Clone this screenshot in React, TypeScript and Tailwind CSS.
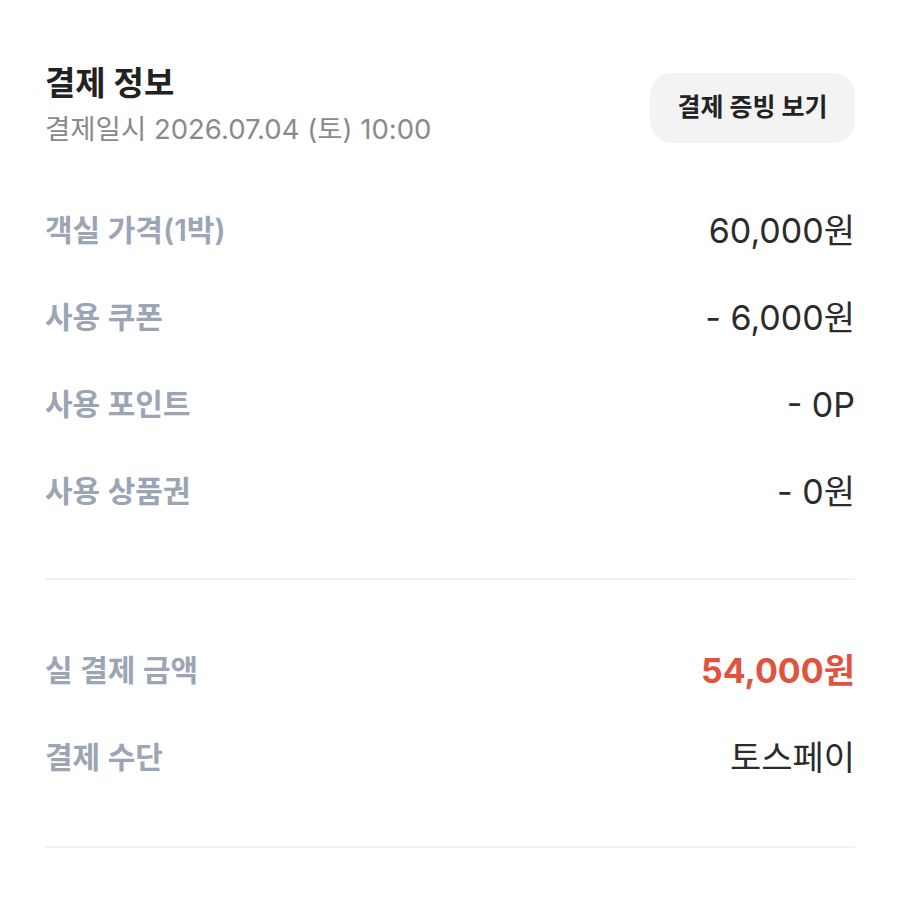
const font = { fontFamily: '"Inter", "Noto Sans CJK KR", sans-serif' };

type Row = { label: string; value: string; accent?: boolean };

const priceRows: Row[] = [
  { label: '객실 가격(1박)', value: '60,000원' },
  { label: '사용 쿠폰', value: '- 6,000원' },
  { label: '사용 포인트', value: '- 0P' },
  { label: '사용 상품권', value: '- 0원' },
];

const payRows: Row[] = [
  { label: '실 결제 금액', value: '54,000원', accent: true },
  { label: '결제 수단', value: '토스페이' },
];

function InfoRow({ label, value, accent }: Row) {
  return (
    <div className="flex h-[87px] items-center justify-between">
      <span className="text-[30px] font-semibold text-[#9ba5b4]">{label}</span>
      <span
        className={
          accent
            ? 'text-[34px] font-bold text-[#e0533f]'
            : 'text-[34px] text-[#2b2b2b]'
        }
      >
        {value}
      </span>
    </div>
  );
}

export default function App() {
  return (
    <div className="min-h-[898px] w-full bg-white px-[45px] pt-[60px]" style={font}>
      <div className="flex items-start justify-between">
        <div className="flex flex-col">
          <h1 className="text-[33px] leading-[46px] font-bold text-[#222]">결제 정보</h1>
          <p className="mt-[4px] text-[27.5px] leading-[38px] text-[#8a8a8a]">
            결제일시 2026.07.04 (토) 10:00
          </p>
        </div>
        <button className="mt-[13px] h-[70px] w-[205px] rounded-[22px] bg-[#f3f3f3] text-[25px] font-bold text-[#222]">
          결제 증빙 보기
        </button>
      </div>

      <div className="mt-[39px]">
        {priceRows.map((r) => (
          <InfoRow key={r.label} {...r} />
        ))}
      </div>

      <div className="mt-[43px] h-[2px] bg-[#f2f2f2]" />

      <div className="mt-[47px]">
        {payRows.map((r) => (
          <InfoRow key={r.label} {...r} />
        ))}
      </div>

      <div className="mt-[45px] h-[2px] bg-[#f2f2f2]" />
    </div>
  );
}
